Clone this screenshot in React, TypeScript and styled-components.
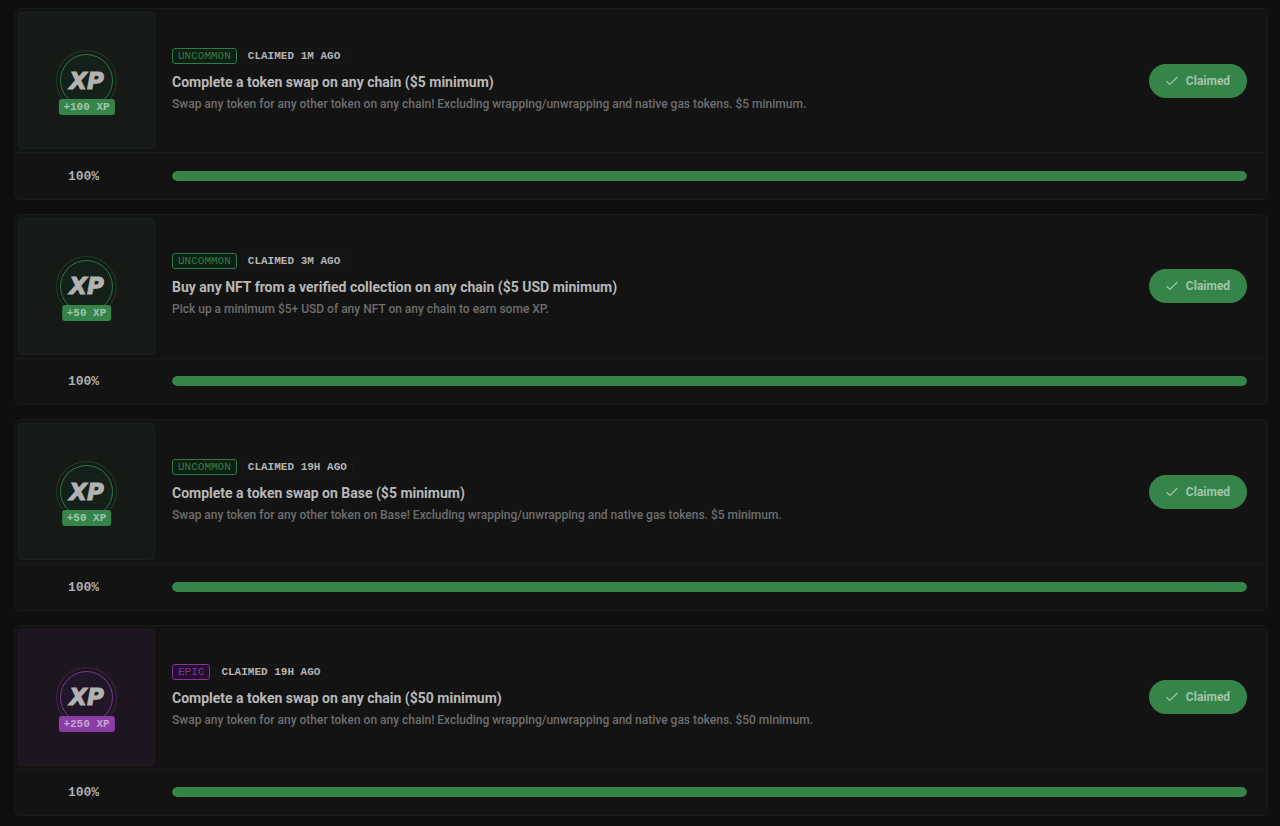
import React from 'react';
import styled, { createGlobalStyle } from 'styled-components';

type Rarity = 'uncommon' | 'epic';

interface Palette {
  line: string;
  ring: string;
  text: string;
  fill: string;
  onFill: string;
  tile: string;
  tileBorder: string;
  disc: string;
  pill: string;
}

const palettes: Record<Rarity, Palette> = {
  uncommon: {
    line: '#2f7a45',
    ring: '#1f4029',
    text: '#317c47',
    fill: '#35854a',
    onFill: '#a3c4aa',
    tile: '#151a17',
    tileBorder: '#1a201c',
    disc: '#14201a',
    pill: '#0e1f13',
  },
  epic: {
    line: '#7a3a90',
    ring: '#42244d',
    text: '#7a3a90',
    fill: '#8a3da6',
    onFill: '#c6a5d0',
    tile: '#1d151f',
    tileBorder: '#231926',
    disc: '#211627',
    pill: '#260f30',
  },
};

interface Quest {
  rarity: Rarity;
  xp: number;
  claimed: string;
  title: string;
  description: string;
  progress: number;
}

const quests: Quest[] = [
  {
    rarity: 'uncommon',
    xp: 100,
    claimed: '1m ago',
    title: 'Complete a token swap on any chain ($5 minimum)',
    description:
      'Swap any token for any other token on any chain! Excluding wrapping/unwrapping and native gas tokens. $5 minimum.',
    progress: 100,
  },
  {
    rarity: 'uncommon',
    xp: 50,
    claimed: '3m ago',
    title: 'Buy any NFT from a verified collection on any chain ($5 USD minimum)',
    description: 'Pick up a minimum $5+ USD of any NFT on any chain to earn some XP.',
    progress: 100,
  },
  {
    rarity: 'uncommon',
    xp: 50,
    claimed: '19h ago',
    title: 'Complete a token swap on Base ($5 minimum)',
    description:
      'Swap any token for any other token on Base! Excluding wrapping/unwrapping and native gas tokens. $5 minimum.',
    progress: 100,
  },
  {
    rarity: 'epic',
    xp: 250,
    claimed: '19h ago',
    title: 'Complete a token swap on any chain ($50 minimum)',
    description:
      'Swap any token for any other token on any chain! Excluding wrapping/unwrapping and native gas tokens. $50 minimum.',
    progress: 100,
  },
];

const GlobalStyle = createGlobalStyle`
  *, *::before, *::after { box-sizing: border-box; }
  body {
    margin: 0;
    background: #0f0f0f;
    color: #b4b4b4;
    font-family: Roboto, "Liberation Sans", sans-serif;
  }
`;

const mono = '"Liberation Mono", monospace';

const QuestList = styled.main`
  display: flex;
  flex-direction: column;
  gap: 14px;
  min-height: 100vh;
  padding: 8px 12px 10px 14px;
`;

const Card = styled.article`
  flex: 1 0 auto;
  display: flex;
  flex-direction: column;
  background: #131313;
  border: 1px solid #1a1a1a;
  border-radius: 6px;
`;

const CardBody = styled.div`
  display: flex;
  align-items: center;
  gap: 17px;
  padding: 3px 20px 3px 3px;
`;

const RewardTile = styled.div<{ $palette: Palette }>`
  flex: none;
  display: grid;
  place-items: center;
  width: 137px;
  height: 137px;
  background: ${(p) => p.$palette.tile};
  border: 1px solid ${(p) => p.$palette.tileBorder};
  border-radius: 4px;
`;

const Medal = styled.div<{ $palette: Palette }>`
  position: relative;
  display: grid;
  place-items: center;
  width: 61px;
  height: 61px;
  border: 1px solid ${(p) => p.$palette.ring};
  border-radius: 50%;

  &::before {
    content: '';
    grid-area: 1 / 1;
    width: 53px;
    height: 53px;
    background: ${(p) => p.$palette.disc};
    border: 1px solid ${(p) => p.$palette.line};
    border-radius: 50%;
  }
`;

const MedalText = styled.span`
  grid-area: 1 / 1;
  z-index: 1;
  font-family: "DejaVu Sans", sans-serif;
  font-size: 23px;
  font-style: italic;
  font-weight: 700;
  line-height: 24px;
  color: #b2b2b2;
  -webkit-text-stroke: 1px #b2b2b2;
`;

const RewardBadge = styled.span<{ $palette: Palette }>`
  position: absolute;
  z-index: 2;
  bottom: -5px;
  left: 50%;
  transform: translateX(-50%);
  padding: 0 5px;
  background: ${(p) => p.$palette.fill};
  border-radius: 3px;
  font-family: ${mono};
  font-size: 11px;
  font-weight: 700;
  line-height: 16px;
  white-space: pre;
  color: ${(p) => p.$palette.onFill};
`;

const Details = styled.div`
  flex: 1;
  min-width: 0;
`;

const Tags = styled.div`
  display: flex;
  gap: 5px;
  margin-bottom: 8px;
`;

const Tag = styled.span<{ $palette?: Palette }>`
  padding: 1px 5px 0;
  background: ${(p) => (p.$palette ? p.$palette.pill : 'transparent')};
  border: 1px solid ${(p) => (p.$palette ? p.$palette.line : '#171717')};
  border-radius: 3px;
  font-family: ${mono};
  font-size: 11px;
  font-weight: ${(p) => (p.$palette ? 400 : 700)};
  line-height: 13px;
  text-transform: uppercase;
  color: ${(p) => (p.$palette ? p.$palette.text : '#b4b4b4')};
`;

const Title = styled.h2`
  margin: 0 0 2px;
  font-size: 14px;
  font-weight: 700;
  line-height: 20px;
  color: #b8b8b8;
`;

const Description = styled.p`
  margin: 0;
  font-size: 12px;
  font-weight: 500;
  line-height: 20px;
  color: #6e6e6e;
`;

const ClaimButton = styled.button`
  flex: none;
  display: flex;
  align-items: center;
  justify-content: center;
  gap: 8px;
  width: 98px;
  height: 34px;
  padding: 0;
  background: #35854a;
  border: 0;
  border-radius: 17px;
  font-family: inherit;
  font-size: 12px;
  font-weight: 700;
  color: #a3c4aa;
`;

const CardFooter = styled.div`
  flex: 1;
  display: flex;
  align-items: center;
  gap: 20px;
  min-height: 46px;
  padding-right: 20px;
  border-top: 1px solid #1a1a1a;
`;

const Percent = styled.span`
  flex: none;
  width: 137px;
  padding-top: 2px;
  font-family: ${mono};
  font-size: 13px;
  font-weight: 700;
  line-height: 16px;
  text-align: center;
  color: #b0b0b0;
`;

const Track = styled.div`
  flex: 1;
  height: 10px;
  overflow: hidden;
  background: #1c1c1c;
  border-radius: 5px;
`;

const Bar = styled.div`
  height: 100%;
  background: #35854a;
  border-radius: 5px;
`;

const CheckIcon = () => (
  <svg width="12" height="12" viewBox="0 0 12 12" fill="none" stroke="currentColor" strokeWidth="1.2" aria-hidden="true">
    <path d="M0.6 6.2 3.9 9.4 11.4 2" />
  </svg>
);

const QuestCard = ({ quest }: { quest: Quest }) => {
  const palette = palettes[quest.rarity];
  return (
    <Card>
      <CardBody>
        <RewardTile $palette={palette}>
          <Medal $palette={palette}>
            <MedalText>XP</MedalText>
            <RewardBadge $palette={palette}>+{quest.xp} XP</RewardBadge>
          </Medal>
        </RewardTile>
        <Details>
          <Tags>
            <Tag $palette={palette}>{quest.rarity}</Tag>
            <Tag>Claimed {quest.claimed}</Tag>
          </Tags>
          <Title>{quest.title}</Title>
          <Description>{quest.description}</Description>
        </Details>
        <ClaimButton type="button">
          <CheckIcon />
          Claimed
        </ClaimButton>
      </CardBody>
      <CardFooter>
        <Percent>{quest.progress}%</Percent>
        <Track role="progressbar" aria-label={quest.title} aria-valuenow={quest.progress} aria-valuemin={0} aria-valuemax={100}>
          <Bar style={{ width: `${quest.progress}%` }} />
        </Track>
      </CardFooter>
    </Card>
  );
};

export default function App() {
  return (
    <>
      <GlobalStyle />
      <QuestList>
        {quests.map((quest, i) => (
          <QuestCard key={i} quest={quest} />
        ))}
      </QuestList>
    </>
  );
}
